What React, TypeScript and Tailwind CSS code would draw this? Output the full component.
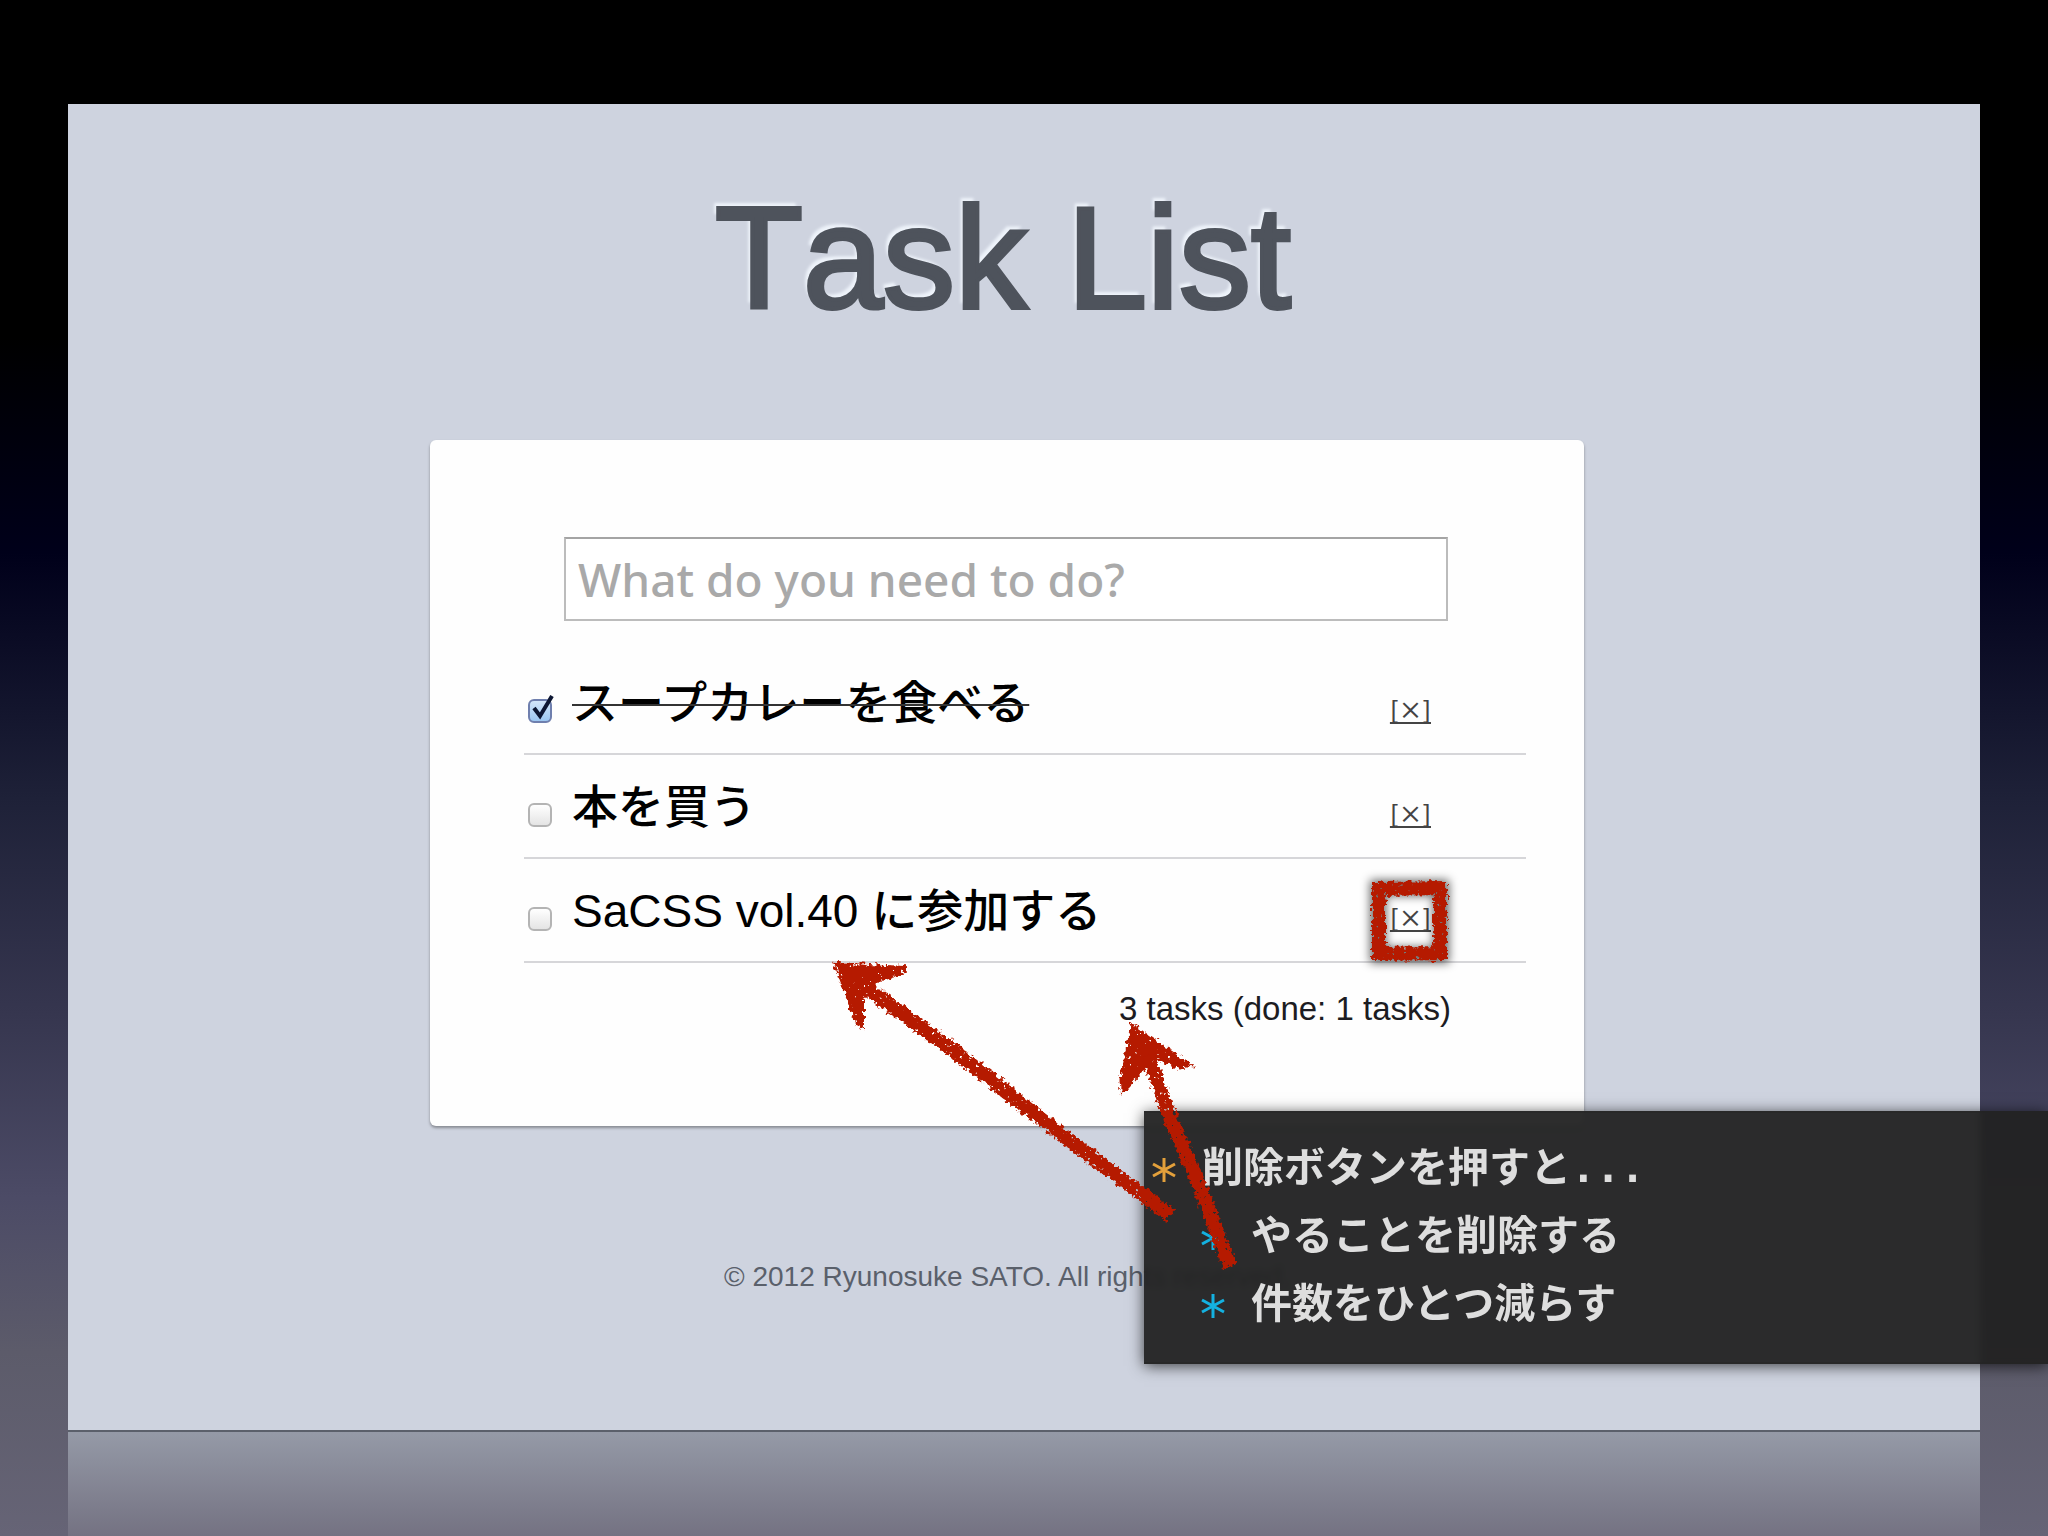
import { useState } from "react";

type Task = {
  id: number;
  title: string;
  done: boolean;
};

const initialTasks: Task[] = [
  { id: 1, title: "スープカレーを食べる", done: true },
  { id: 2, title: "本を買う", done: false },
  { id: 3, title: "SaCSS vol.40 に参加する", done: false },
];

const TaskRow = ({ task, onToggle, onRemove }: { task: Task; onToggle: () => void; onRemove: () => void }) => {
  const inputId = `task-${task.id}`;
  return (
    <li className="flex h-[104px] items-center border-b-2 border-[#d6d6d9] pt-0.5 pr-[95px] pl-1">
      <span className="relative mt-4 flex h-6 w-6 shrink-0">
        <input
          id={inputId}
          type="checkbox"
          checked={task.done}
          onChange={onToggle}
          className="h-6 w-6 appearance-none rounded-md border-2 border-[#b4b4b4] bg-linear-to-b from-white to-[#e4e4e4] checked:border-[#6f7fae] checked:from-[#d3e6fa] checked:to-[#9cc8f2]"
        />
        {task.done ? (
          <svg
            className="pointer-events-none absolute -top-1 left-0 h-7 w-7"
            viewBox="0 0 28 28"
            fill="none"
            stroke="#0d1733"
            strokeWidth="4"
            aria-hidden="true"
          >
            <path d="M6 13l6 8L24 1" />
          </svg>
        ) : null}
      </span>
      <label
        htmlFor={inputId}
        className={`ml-5 grow text-[46px] leading-[60px] font-medium text-black ${
          task.done ? "line-through decoration-[#333] decoration-2" : ""
        }`}
      >
        {task.title}
      </label>
      <a
        href="#remove"
        onClick={(event) => {
          event.preventDefault();
          onRemove();
        }}
        className="mt-3 font-['Noto_Sans_CJK_JP',sans-serif] text-2xl font-medium text-[#444] underline decoration-2 underline-offset-3 [text-decoration-skip-ink:none]"
      >
        [×]
      </a>
    </li>
  );
};

const Bullet = ({ color }: { color: string }) => (
  <svg
    className={`mt-1 h-6 w-6 shrink-0 ${color}`}
    viewBox="0 0 24 24"
    stroke="currentColor"
    strokeWidth="3"
    aria-hidden="true"
  >
    <path d="M12 0v24M1 6l22 12M23 6L1 18" />
  </svg>
);

// Chalk-like marks drawn over the page
const Annotations = () => (
  <svg
    className="pointer-events-none absolute top-0 left-0 h-[1536px] w-[2048px]"
    viewBox="0 0 2048 1536"
    aria-hidden="true"
  >
    <defs>
      <filter
        id="chalk"
        filterUnits="userSpaceOnUse"
        x="800"
        y="840"
        width="700"
        height="460"
        colorInterpolationFilters="sRGB"
      >
        <feTurbulence type="fractalNoise" baseFrequency="0.25" numOctaves="2" seed="4" result="noise" />
        <feDisplacementMap in="SourceGraphic" in2="noise" scale="9" xChannelSelector="R" yChannelSelector="G" result="rough" />
        <feColorMatrix in="noise" type="matrix" values="0 0 0 0 0  0 0 0 0 0  0 0 0 0 0  0 0 14 0 -3" result="grain" />
        <feComposite in="rough" in2="grain" operator="in" />
      </filter>
      <filter id="soft" filterUnits="userSpaceOnUse" x="1340" y="850" width="140" height="140">
        <feGaussianBlur stdDeviation="5" />
      </filter>
    </defs>
    <rect x="1378" y="888" width="63" height="67" fill="none" stroke="#000" strokeOpacity="0.6" strokeWidth="16" filter="url(#soft)" />
    <g filter="url(#chalk)" fill="#b51a00" stroke="#b51a00">
      <path d="M1379 889L1440 888L1440 953L1379 954Z" fill="none" strokeWidth="14" />
      <path d="M836 964L904 968L900 974L873 981L876 992L862 996L862 1026L858 1024Z" strokeWidth="4" />
      <path d="M866 988L953 1050L1037 1116L1170 1215" fill="none" strokeWidth="14" />
      <path d="M1133 1027L1188 1065L1178 1066L1157 1057L1143 1068L1123 1090L1122 1080Z" strokeWidth="5" />
      <path d="M1148 1055L1170 1117L1198 1182L1230 1267" fill="none" strokeWidth="14" />
    </g>
  </svg>
);

const NotePanel = () => (
  <aside className="absolute top-[1111px] right-0 flex h-[253px] w-[904px] flex-col border-y-2 border-[#222]/40 bg-[#222]/95 pt-[21px] pl-2 font-['DejaVu_Sans_Mono','Noto_Sans_CJK_JP',monospace] text-[41px] leading-[68px] font-bold text-[#dedede] shadow-[0_2px_14px_rgba(0,0,0,0.7)] backdrop-blur-[3px]">
    <ul>
      <li>
        <div className="flex items-center gap-[26px]">
          <Bullet color="text-[#e3a03b]" />
          <span>削除ボタンを押すと...</span>
        </div>
        <ul className="pl-[49px]">
          {["やることを削除する", "件数をひとつ減らす"].map((text) => (
            <li key={text} className="flex items-center gap-[26px]">
              <Bullet color="text-[#14b1e0]" />
              <span>{text}</span>
            </li>
          ))}
        </ul>
      </li>
    </ul>
  </aside>
);

const App = () => {
  const [tasks, setTasks] = useState<Task[]>(initialTasks);
  const [draft, setDraft] = useState("");

  const toggleTask = (id: number) =>
    setTasks((current) => current.map((task) => (task.id === id ? { ...task, done: !task.done } : task)));

  const removeTask = (id: number) => setTasks((current) => current.filter((task) => task.id !== id));

  const addTask = (event: React.FormEvent) => {
    event.preventDefault();
    if (!draft.trim()) {
      return;
    }
    setTasks((current) => [...current, { id: Date.now(), title: draft.trim(), done: false }]);
    setDraft("");
  };

  return (
    <div className="relative flex min-h-screen flex-col overflow-hidden bg-[linear-gradient(to_bottom,#000_22%,#00001a_36%,#1e2138_52%,#36364f_66%,#4c4b66_78%,#5c5b6a_88%,#666476_100%)] px-[68px] pt-[104px] font-['Liberation_Sans','Noto_Sans_CJK_JP',sans-serif]">
      <main className="flex grow flex-col items-center border-b-2 border-[#5b606b] bg-[#ced3df] pt-[83px] pr-[34px]">
        <h1 className="pr-2 text-[144px] leading-[144px] text-[#4e535c] [font-kerning:none] [-webkit-text-stroke:4px_#4e535c] [text-shadow:-4px_-5px_3px_#eef3fa]">
          Task List
        </h1>

        <section className="mt-[109px] w-full max-w-[1154px] rounded-md bg-[#fefefe] pt-[97px] pr-[58px] pb-[95px] pl-[94px] shadow-[0_2px_3px_rgba(0,0,0,0.35)]">
          <form onSubmit={addTask} className="pr-[78px] pl-10">
            <input
              type="text"
              aria-label="New task"
              value={draft}
              onChange={(event) => setDraft(event.target.value)}
              placeholder="What do you need to do?"
              className="h-[84px] w-full border-2 border-[#bcbcbc] border-t-[#a4a4a4] bg-white px-3 font-['Noto_Sans',sans-serif] text-[46px] font-medium text-black placeholder:text-[#a9a9a9]"
            />
          </form>

          <ul className="mt-[30px]">
            {tasks.map((task) => (
              <TaskRow
                key={task.id}
                task={task}
                onToggle={() => toggleTask(task.id)}
                onRemove={() => removeTask(task.id)}
              />
            ))}
          </ul>

          <p className="mt-6 pr-[75px] text-right text-[33px] leading-[44px] text-[#1c1c22]">
            {tasks.length} tasks (done: {tasks.filter((task) => task.done).length} tasks)
          </p>
        </section>

        <footer className="mt-[131px] text-[28px] leading-10 text-[#5a606b]">
          © 2012 Ryunosuke SATO. All rights reserved.
        </footer>
      </main>
      <div className="h-[104px] bg-linear-to-b from-[#959aa7] to-[#747282]" />

      <NotePanel />
      <Annotations />
    </div>
  );
};

export default App;
